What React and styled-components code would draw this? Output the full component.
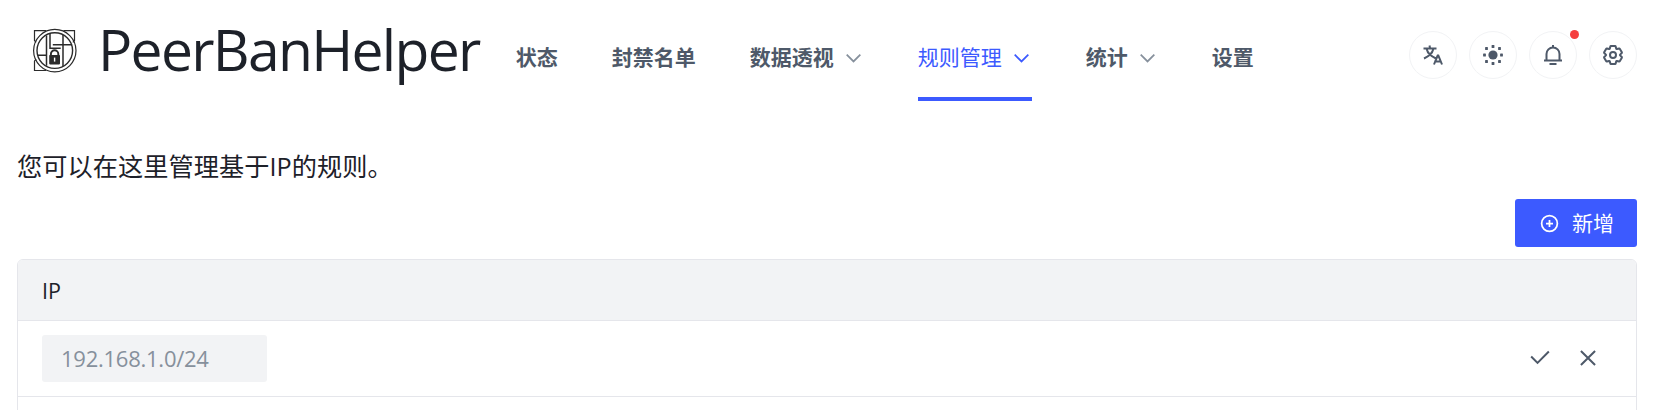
import React from "react";
import styled, { createGlobalStyle } from "styled-components";

const GlobalStyle = createGlobalStyle`
  * { box-sizing: border-box; }
  body {
    margin: 0;
    background: #fff;
    color: #1d2129;
    font-family: "Open Sans", "Noto Sans CJK SC", sans-serif;
    font-size: 21px;
    overflow: hidden;
  }
`;

const Page = styled.div`
  height: 410px;
  overflow: hidden;
  padding: 0 16px 0 17px;
`;

const Header = styled.header`
  display: flex;
  align-items: flex-start;
  height: 110px;
`;

const Logo = styled.svg`
  flex: none;
  width: 46px;
  height: 46px;
  margin: 28px 0 0 15px;
`;

const Brand = styled.div`
  flex: none;
  width: 437px;
  padding: 4px 0 0 20px;
  font-size: 57px;
  line-height: 90px;
  letter-spacing: -1.7px;
  white-space: nowrap;
`;

const Nav = styled.nav`
  display: flex;
  gap: 54px;
  margin-left: 0.8px;
`;

const NavItem = styled.a`
  display: flex;
  align-items: center;
  gap: 9px;
  height: 101px;
  padding: 18px 0 ${(p) => (p.$active ? 0 : 4)}px;
  border-bottom: ${(p) => (p.$active ? "4px solid #3c5aff" : "0")};
  color: ${(p) => (p.$active ? "#3c5aff" : "#4e5969")};
  font-weight: ${(p) => (p.$active ? 400 : 700)};
  line-height: 33px;
  white-space: nowrap;
`;

const Actions = styled.div`
  display: flex;
  gap: 12px;
  margin: 31px 0 0 auto;
`;

const RoundButton = styled.button`
  position: relative;
  display: flex;
  align-items: center;
  justify-content: center;
  width: 48px;
  height: 48px;
  padding: 0;
  border: 1px solid #f2f3f5;
  border-radius: 50%;
  background: #fff;
  color: #4e5969;
`;

const Dot = styled.span`
  position: absolute;
  top: -2.5px;
  right: -2.5px;
  width: 9px;
  height: 9px;
  border-radius: 50%;
  background: #f53f3f;
`;

const StrokeIcon = styled.svg`
  flex: none;
  width: ${(p) => p.$size}px;
  height: ${(p) => p.$size}px;
  color: ${(p) => p.$color || "inherit"};
  fill: none;
  stroke: currentColor;
  stroke-width: 4;
`;

const Description = styled.p`
  margin: 36px 0 0;
  height: 40px;
  font-size: 25.2px;
  line-height: 40px;
  letter-spacing: 0.06px;
`;

const Toolbar = styled.div`
  display: flex;
  justify-content: flex-end;
  margin-top: 13px;
`;

const AddButton = styled.button`
  display: flex;
  align-items: center;
  gap: 12px;
  width: 122px;
  height: 48px;
  padding: 0 0 0 24px;
  border: 0;
  border-radius: 3px;
  background: #3c5aff;
  color: #fff;
  font: inherit;
`;

const ButtonLabel = styled.span`
  padding-bottom: 2px;
`;

const Table = styled.div`
  height: 200px;
  margin-top: 12px;
  border: 1px solid #e5e6eb;
  border-radius: 6px;
  overflow: hidden;
`;

const TableHead = styled.div`
  display: flex;
  align-items: center;
  height: 61px;
  padding: 0 24px;
  border-bottom: 1px solid #e5e6eb;
  background: #f2f3f5;
  font-size: 21.5px;
  font-weight: 500;
`;

const TableRow = styled.div`
  display: flex;
  align-items: center;
  justify-content: space-between;
  height: 76px;
  padding: 0 36px 0 24px;
  border-bottom: 1px solid #e5e6eb;
`;

const IpInput = styled.input`
  width: 225px;
  height: 47px;
  padding: 0 19px 2px;
  border: 0;
  border-radius: 3px;
  background: #f2f3f5;
  color: #86909c;
  font: inherit;
  font-size: 22px;
  letter-spacing: -0.25px;
  &::placeholder { color: #86909c; opacity: 1; }
`;

const RowActions = styled.div`
  display: flex;
  gap: 24px;
  padding-bottom: 2px;
  color: #4e5969;
`;

const paths = {
  down: "M39.6 17.443 24.043 33 8.487 17.443",
  check: "M41.678 11.05 19.05 33.678 6.322 20.95",
  close: "M9.857 9.858 24 24m0 0 14.142 14.142M24 24 38.142 9.858M24 24 9.857 38.142",
  plus: "M24 16v16M16 24h16M42 24c0 9.941-8.059 18-18 18S6 33.941 6 24 14.059 6 24 6s18 8.059 18 18Z",
  language:
    "m42 43-2.385-6M26 43l2.384-6m11.231 0-.795-2-4.18-10h-1.28l-4.181 10-.795 2m11.231 0h-11.23M17 5l1 5M5 11h26M11 11s1.889 7.826 6.611 12.174C22.333 27.522 30 31 30 31M25 11s-1.889 7.826-6.611 12.174C13.667 27.522 6 31 6 31",
  bell: "M24 9c7.18 0 13 5.82 13 13v13H11V22c0-7.18 5.82-13 13-13Zm0 0V4M6 35h36m-25 7h14",
  settings:
    "M18.797 6.732A1 1 0 0 1 19.76 6h8.48a1 1 0 0 1 .964.732l1.285 4.628a1 1 0 0 0 1.213.7l4.651-1.2a1 1 0 0 1 1.116.468l4.24 7.344a1 1 0 0 1-.153 1.2L38.193 23.3a1 1 0 0 0 0 1.402l3.364 3.427a1 1 0 0 1 .153 1.2l-4.24 7.344a1 1 0 0 1-1.116.468l-4.65-1.2a1 1 0 0 0-1.214.7l-1.285 4.628a1 1 0 0 1-.964.732h-8.48a1 1 0 0 1-.963-.732L17.51 36.64a1 1 0 0 0-1.213-.7l-4.65 1.2a1 1 0 0 1-1.116-.468l-4.24-7.344a1 1 0 0 1 .153-1.2L9.809 24.7a1 1 0 0 0 0-1.402l-3.364-3.427a1 1 0 0 1-.153-1.2l4.24-7.344a1 1 0 0 1 1.116-.468l4.65 1.2a1 1 0 0 0 1.213-.7l1.286-4.628ZM30 24a6 6 0 1 1-12 0 6 6 0 0 1 12 0Z",
};

const Icon = ({ name, size = 24, color }) => (
  <StrokeIcon viewBox="0 0 48 48" $size={size} $color={color}>
    <path d={paths[name]} />
  </StrokeIcon>
);

const SunIcon = () => (
  <StrokeIcon viewBox="0 0 48 48" $size={24}>
    <g fill="currentColor" stroke="none">
      <circle cx="24" cy="24" r="9.2" />
      {[0, 90, 180, 270].map((a) => (
        <g key={a} transform={`rotate(${a} 24 24)`}>
          <rect x="21.2" y="4.2" width="5.6" height="5.6" rx="1" />
          <rect x="34.2" y="8.2" width="5.6" height="5.6" rx="1" />
        </g>
      ))}
    </g>
  </StrokeIcon>
);

const BrandLogo = () => (
  <Logo viewBox="0 0 46 46" fill="none" stroke="#2b2b2b">
    <path
      strokeWidth="1.2"
      d="M14 2.6H2.5V12.5l1.6 1.8M31.5 2.6H42.5V12.5l-1.6 1.8M4.1 31.4 2.5 33V42.5H14"
    />
    <circle cx="22.8" cy="22.6" r="21.2" strokeWidth="1.2" />
    <circle cx="22.8" cy="22.6" r="17.8" strokeWidth="1.4" />
    <path
      strokeWidth="1.5"
      d="M14.5 7.5v19.8H5.8M14.5 27.3v10.4M18 5.8v14.4h10.7M20.8 16.8h19.4M31 7v31.2"
    />
    <path d="M18.9 28v-2a3.7 3.7 0 0 1 7.4 0v2" strokeWidth="1.9" />
    <rect x="17.2" y="27" width="10.8" height="9.4" rx="0.8" fill="#2b2b2b" stroke="none" />
    <path d="M22.6 29.6v4" stroke="#fff" strokeWidth="1.4" />
  </Logo>
);

const navItems = [
  { label: "状态" },
  { label: "封禁名单" },
  { label: "数据透视", menu: true },
  { label: "规则管理", menu: true, active: true },
  { label: "统计", menu: true },
  { label: "设置" },
];

export default function App() {
  return (
    <Page>
      <GlobalStyle />
      <Header>
        <BrandLogo />
        <Brand>PeerBanHelper</Brand>
        <Nav>
          {navItems.map(({ label, menu, active }) => (
            <NavItem key={label} $active={active}>
              {label}
              {menu && <Icon name="down" size={21} color={active ? "#3c5aff" : "#86909c"} />}
            </NavItem>
          ))}
        </Nav>
        <Actions>
          <RoundButton><Icon name="language" /></RoundButton>
          <RoundButton><SunIcon /></RoundButton>
          <RoundButton><Icon name="bell" /><Dot /></RoundButton>
          <RoundButton><Icon name="settings" /></RoundButton>
        </Actions>
      </Header>
      <Description>您可以在这里管理基于IP的规则。</Description>
      <Toolbar>
        <AddButton><Icon name="plus" size={21} /><ButtonLabel>新增</ButtonLabel></AddButton>
      </Toolbar>
      <Table>
        <TableHead>IP</TableHead>
        <TableRow>
          <IpInput placeholder="192.168.1.0/24" />
          <RowActions>
            <Icon name="check" />
            <Icon name="close" />
          </RowActions>
        </TableRow>
      </Table>
    </Page>
  );
}
